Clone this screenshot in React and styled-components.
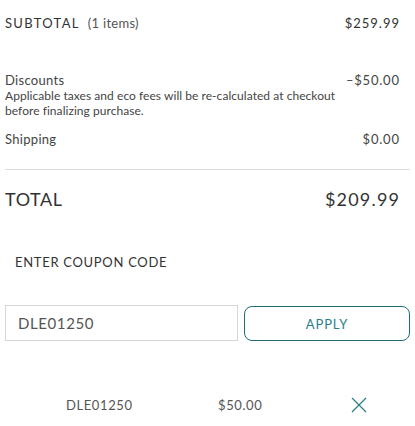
import styled, { createGlobalStyle } from "styled-components";

const GlobalStyle = createGlobalStyle`
  body {
    margin: 0;
    background: #fff;
    font-family: "Lato", "Noto Sans", sans-serif;
    color: #333;
  }
`;

const Wrapper = styled.section`
  width: 415px;
  padding: 0 5px 0 5px;
  box-sizing: border-box;
`;

const Row = styled.div`
  display: flex;
  justify-content: space-between;
  align-items: baseline;
  padding-right: 11px;
  margin-top: ${(p) => p.$top || 0}px;
  font-size: ${(p) => p.$size || 13}px;
  line-height: ${(p) => p.$line || 16}px;
  color: ${(p) => p.$color || "#444"};
  letter-spacing: 0.3px;
`;

const Label = styled.span`
  letter-spacing: ${(p) => p.$spacing || 0}px;
`;

const Amount = styled.span`
  letter-spacing: ${(p) => p.$spacing || 0.8}px;
  margin-right: -${(p) => p.$spacing || 0.8}px;
`;

const Muted = styled.span`
  font-size: 13px;
  color: #555;
  margin-left: 8px;
  letter-spacing: 0.3px;
`;

const Note = styled.p`
  margin: 0;
  font-size: 12px;
  line-height: 15px;
  color: #444;
  letter-spacing: 0.05px;
`;

const Divider = styled.hr`
  border: none;
  border-top: 1px solid #ddd;
  margin: 22px 0 0 0;
`;

const CouponTitle = styled.h3`
  margin: 45px 0 0 10px;
  font-size: 13px;
  font-weight: 400;
  letter-spacing: 0.7px;
  color: #333;
  line-height: 16px;
`;

const CouponForm = styled.form`
  display: flex;
  gap: 6px;
  margin-top: 35px;
`;

const CouponInput = styled.input`
  width: 233px;
  height: 36px;
  box-sizing: border-box;
  border: 1px solid #d6d6d6;
  padding: 0 12px;
  font-family: inherit;
  font-size: 15px;
  letter-spacing: 0.6px;
  color: #555;
  outline: none;
`;

const ApplyButton = styled.button`
  flex: 1;
  height: 35px;
  margin-top: 1px;
  box-sizing: border-box;
  border: 1px solid #1e6e76;
  border-radius: 8px;
  background: #fff;
  color: #2b7f89;
  font-family: inherit;
  font-size: 13px;
  letter-spacing: 0.9px;
  cursor: pointer;
`;

const AppliedRow = styled.div`
  display: grid;
  grid-template-columns: 61px 152px 133px 20px;
  align-items: center;
  margin-top: 56px;
  font-size: 13px;
  letter-spacing: 0.6px;
  color: #555;
`;

const RemoveButton = styled.button`
  background: none;
  border: none;
  padding: 0;
  display: flex;
  cursor: pointer;
`;

function App() {
  return (
    <Wrapper>
      <GlobalStyle />
      <Row $top={15} $size={13} $color="#333">
        <span>
          <Label $spacing={1.3}>SUBTOTAL</Label>
          <Muted>(1 items)</Muted>
        </span>
        <Amount $spacing={1}>$259.99</Amount>
      </Row>
      <Row $top={41}>
        <span>Discounts</span>
        <Amount>–$50.00</Amount>
      </Row>
      <Note>
        Applicable taxes and eco fees will be re-calculated at checkout
        <br />
        before finalizing purchase.
      </Note>
      <Row $top={13}>
        <span>Shipping</span>
        <Amount>$0.00</Amount>
      </Row>
      <Divider />
      <Row $top={19} $size={18} $line={20} $color="#333">
        <Label $spacing={0.6}>TOTAL</Label>
        <Amount $spacing={1.2}>$209.99</Amount>
      </Row>
      <CouponTitle>ENTER COUPON CODE</CouponTitle>
      <CouponForm onSubmit={(e) => e.preventDefault()}>
        <CouponInput defaultValue="DLE01250" />
        <ApplyButton type="submit">APPLY</ApplyButton>
      </CouponForm>
      <AppliedRow>
        <span />
        <span>DLE01250</span>
        <span>$50.00</span>
        <RemoveButton aria-label="Remove coupon">
          <svg width="16" height="16" viewBox="0 0 16 16">
            <path d="M1 1 L15 15 M15 1 L1 15" stroke="#2b7f89" strokeWidth="1.3" fill="none" />
          </svg>
        </RemoveButton>
      </AppliedRow>
    </Wrapper>
  );
}

export default App;
